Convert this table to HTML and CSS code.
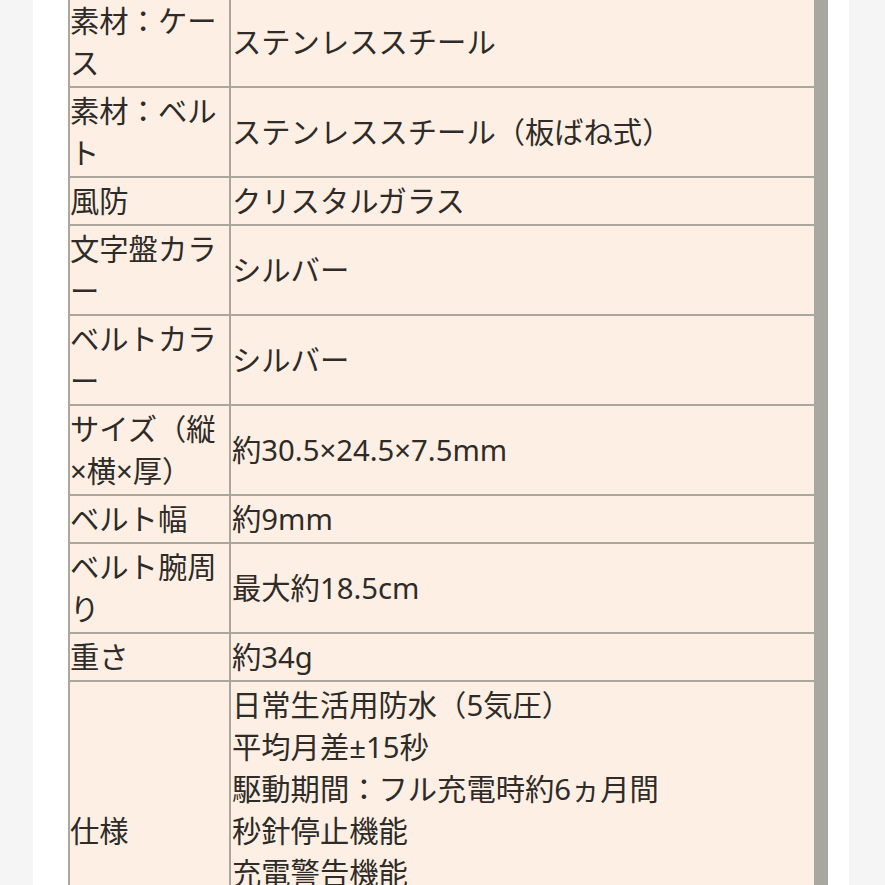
FILE: index.html
```html
<!DOCTYPE html>
<html lang="ja">
<head>
<meta charset="utf-8">
<link rel="stylesheet" href="styles.css">
</head>
<body>
<div class="page">
  <div class="frame">
    <table class="spec">
      <tr><th>素材：ケース</th><td>ステンレススチール</td></tr>
      <tr><th>素材：ベルト</th><td>ステンレススチール（板ばね式）</td></tr>
      <tr><th>風防</th><td>クリスタルガラス</td></tr>
      <tr><th>文字盤カラー</th><td>シルバー</td></tr>
      <tr><th>ベルトカラー</th><td>シルバー</td></tr>
      <tr><th>サイズ（縦×横×厚）</th><td>約30.5×24.5×7.5mm</td></tr>
      <tr><th>ベルト幅</th><td>約9mm</td></tr>
      <tr><th>ベルト腕周り</th><td>最大約18.5cm</td></tr>
      <tr><th>重さ</th><td>約34g</td></tr>
      <tr><th>仕様</th><td>日常生活用防水（5気圧）<br>平均月差±15秒<br>駆動期間：フル充電時約6ヵ月間<br>秒針停止機能<br>充電警告機能<br>過充電防止機能<br>クイックスタート機能</td></tr>
    </table>
  </div>
</div>
</body>
</html>
```

FILE: styles.css
```css
html, body {
  margin: 0;
  padding: 0;
  background: #f5f5f5;
  height: 885px;
  overflow: hidden;
}
.page {
  margin: 0 36px 0 33px;
  background: #ffffff;
  padding-left: 35px;
  height: 885px;
  overflow: hidden;
}
.frame {
  width: 748px;
  border-right: 12px solid #a9a8a0;
  margin-top: -4px;
}
.spec {
  width: 748px;
  border-collapse: collapse;
  table-layout: fixed;
  background: #fdefe3;
  color: #2e2b28;
  font-family: "Noto Sans", "Noto Sans CJK JP", sans-serif;
  font-size: 29.3px;
  line-height: 42px;
}
.spec th, .spec td {
  border: 2px solid #aba79f;
  padding: 2px 0;
  text-align: left;
  font-weight: normal;
  vertical-align: middle;
}
.spec th {
  width: 159px;
}
.spec td {
  padding-left: 1px;
}
```
